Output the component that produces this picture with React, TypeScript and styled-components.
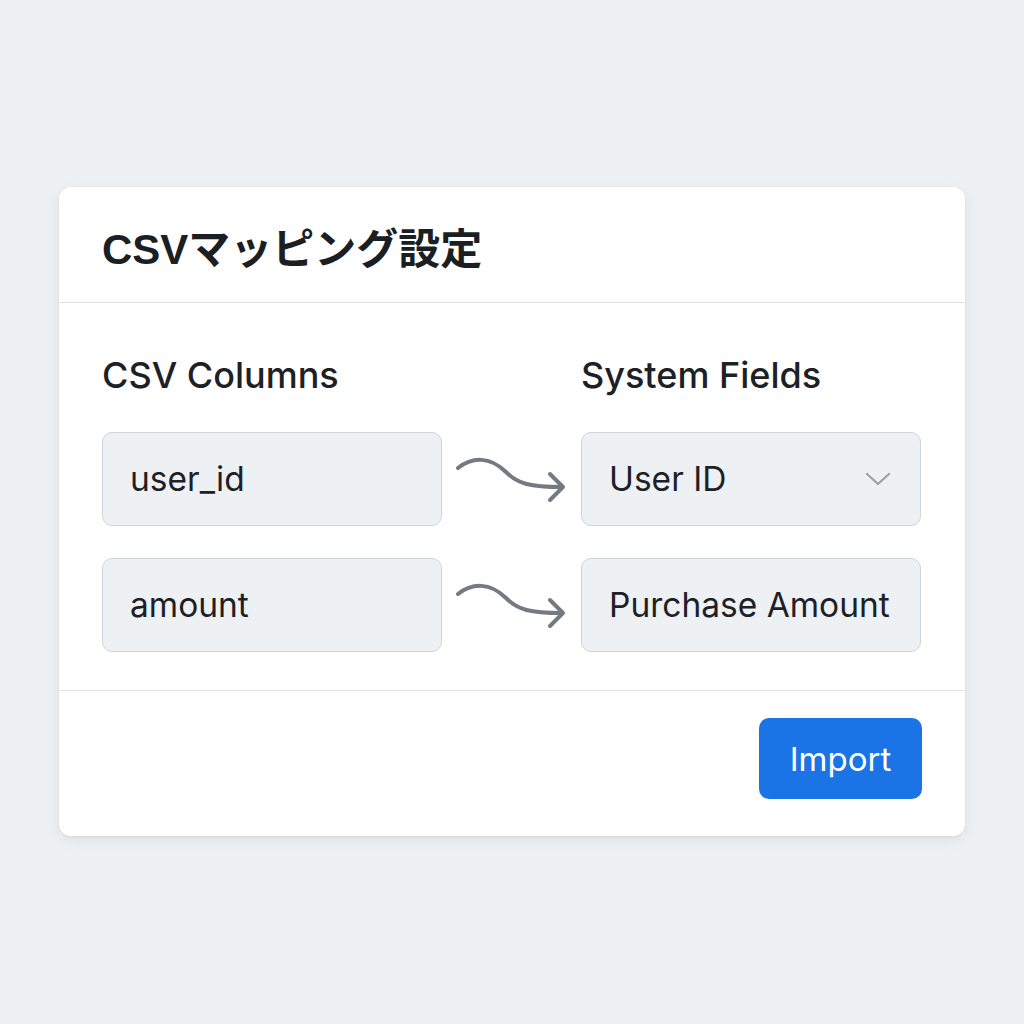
import React from "react";
import styled, { createGlobalStyle } from "styled-components";

const GlobalStyle = createGlobalStyle`
  html, body {
    margin: 0;
    padding: 0;
    background: #eef1f3;
  }
  body {
    font-family: Inter, "Liberation Sans", "Noto Sans CJK JP", sans-serif;
    color: #1d2126;
  }
`;

const Page = styled.div`
  width: 1024px;
  height: 1024px;
  padding-top: 187px;
  padding-left: 59px;
  box-sizing: border-box;
`;

const Card = styled.div`
  width: 906px;
  height: 649px;
  background: #ffffff;
  border-radius: 12px;
  box-shadow: 0 4px 14px rgba(30, 40, 50, 0.08), 0 1px 3px rgba(30, 40, 50, 0.06);
  display: flex;
  flex-direction: column;
  overflow: hidden;
`;

const Header = styled.div`
  height: 116px;
  display: flex;
  align-items: center;
  padding: 0 43px;
  border-bottom: 1.5px solid #dfe2e5;
  box-sizing: border-box;
`;

const Title = styled.h1`
  margin: 0;
  margin-top: 2px;
  font-family: "Liberation Sans", Arial, "Noto Sans CJK JP", sans-serif;
  font-size: 42px;
  font-weight: 700;
  color: #1b1f24;
`;

const Body = styled.div`
  padding: 50px 44px 38px 43px;
  display: grid;
  grid-template-columns: 340px 139px 340px;
  row-gap: 32px;
  border-bottom: 1.5px solid #dfe2e5;
`;

const ColumnLabel = styled.div`
  font-family: Inter, "Liberation Sans", sans-serif;
  font-size: 36px;
  font-weight: 500;
  color: #1d2126;
  line-height: 44px;
  margin-bottom: 3px;
`;

const Field = styled.div<{ $select?: boolean }>`
  height: 94px;
  box-sizing: border-box;
  border: 1.5px solid #cfd4d8;
  border-radius: 10px;
  background: #eef1f4;
  display: flex;
  align-items: center;
  justify-content: space-between;
  padding: 0 ${(p) => (p.$select ? "29px" : "16px")} 0 27px;
  font-family: Inter, "Liberation Sans", sans-serif;
  font-size: 33.5px;
  color: #1d2126;
  white-space: nowrap;
`;

const ArrowCell = styled.div`
  display: flex;
  align-items: center;
  padding-left: 14px;
`;

const Footer = styled.div`
  flex: 1;
  display: flex;
  justify-content: flex-end;
  align-items: flex-start;
  padding: 27px 43px 0 0;
`;

const ImportButton = styled.button`
  width: 163px;
  height: 81px;
  border: none;
  border-radius: 10px;
  background: #1a74e6;
  color: #ffffff;
  font-family: Inter, "Liberation Sans", sans-serif;
  font-size: 33px;
  cursor: pointer;
`;

const Arrow = () => (
  <svg width="112" height="50" viewBox="0 0 112 50" fill="none">
    <path
      d="M2 14 C16 3, 34 2, 50 18 C62 30, 74 33, 106 33"
      stroke="#747a81"
      strokeWidth="4"
      strokeLinecap="round"
    />
    <path
      d="M94 20 L107 33 L94 46"
      stroke="#747a81"
      strokeWidth="4"
      strokeLinecap="round"
      strokeLinejoin="round"
    />
  </svg>
);

const Chevron = () => (
  <svg width="26" height="16" viewBox="0 0 26 16" fill="none">
    <path d="M2 3 L13 13 L24 3" stroke="#9aa0a6" strokeWidth="2.2" strokeLinecap="round" strokeLinejoin="round" />
  </svg>
);

const rows = [
  { source: "user_id", target: "User ID", select: true },
  { source: "amount", target: "Purchase Amount", select: false },
];

export default function App() {
  return (
    <>
      <GlobalStyle />
      <Page>
        <Card>
          <Header>
            <Title>CSVマッピング設定</Title>
          </Header>
          <Body>
            <ColumnLabel>CSV Columns</ColumnLabel>
            <div />
            <ColumnLabel>System Fields</ColumnLabel>
            {rows.map((r) => (
              <React.Fragment key={r.source}>
                <Field>{r.source}</Field>
                <ArrowCell>
                  <Arrow />
                </ArrowCell>
                <Field $select={r.select}>
                  <span>{r.target}</span>
                  {r.select && <Chevron />}
                </Field>
              </React.Fragment>
            ))}
          </Body>
          <Footer>
            <ImportButton>Import</ImportButton>
          </Footer>
        </Card>
      </Page>
    </>
  );
}
